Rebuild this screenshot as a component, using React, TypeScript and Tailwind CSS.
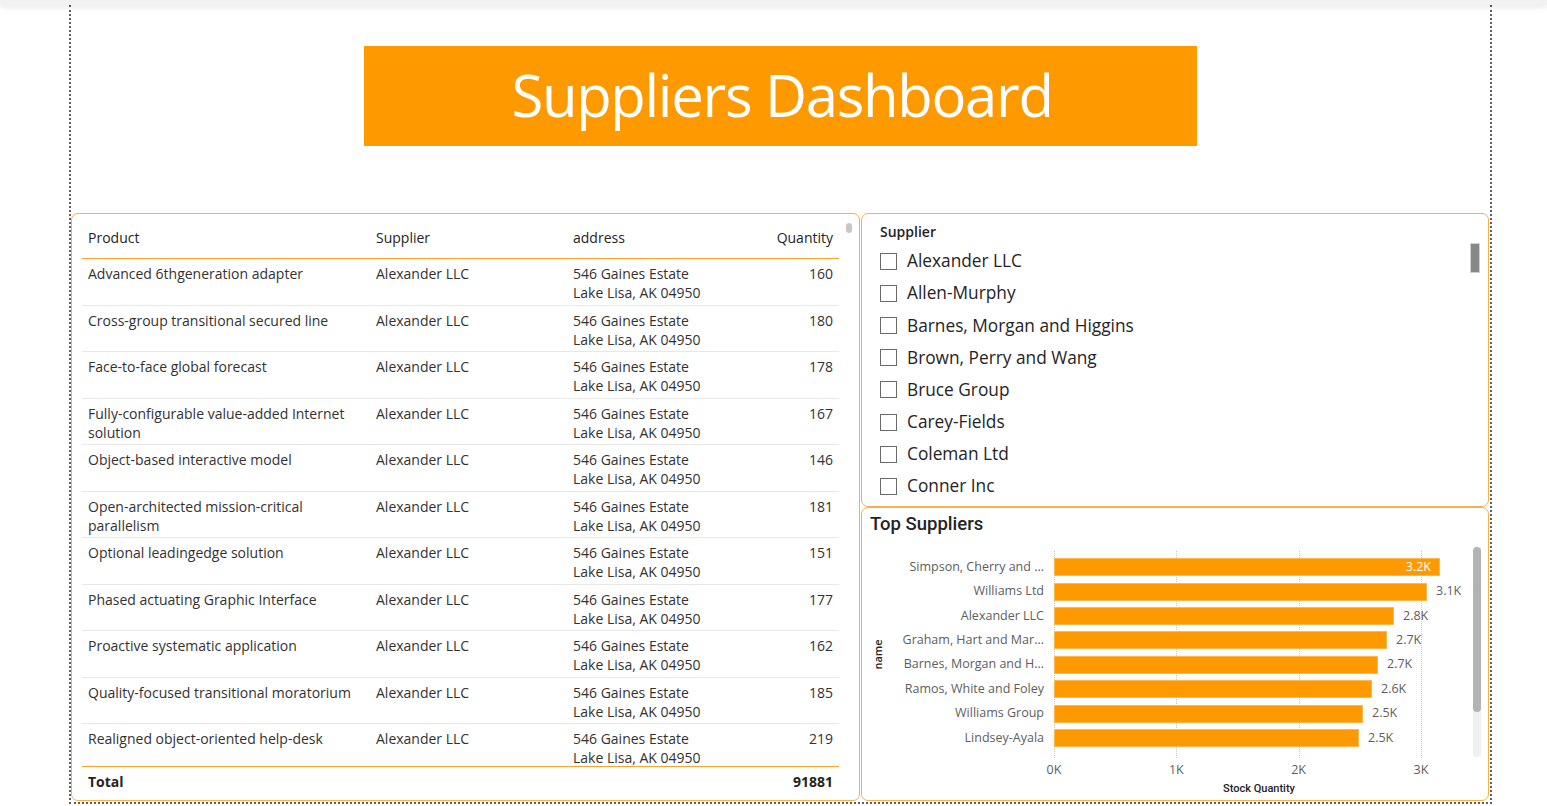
import React from "react";

const rows: { p: string[]; q: number }[] = [
  { p: ["Advanced 6thgeneration adapter"], q: 160 },
  { p: ["Cross-group transitional secured line"], q: 180 },
  { p: ["Face-to-face global forecast"], q: 178 },
  { p: ["Fully-configurable value-added Internet", "solution"], q: 167 },
  { p: ["Object-based interactive model"], q: 146 },
  { p: ["Open-architected mission-critical", "parallelism"], q: 181 },
  { p: ["Optional leadingedge solution"], q: 151 },
  { p: ["Phased actuating Graphic Interface"], q: 177 },
  { p: ["Proactive systematic application"], q: 162 },
  { p: ["Quality-focused transitional moratorium"], q: 185 },
  { p: ["Realigned object-oriented help-desk"], q: 219 },
];

const suppliers = [
  "Alexander LLC",
  "Allen-Murphy",
  "Barnes, Morgan and Higgins",
  "Brown, Perry and Wang",
  "Bruce Group",
  "Carey-Fields",
  "Coleman Ltd",
  "Conner Inc",
];

const bars: { n: string; w: number; v: string; inside?: boolean }[] = [
  { n: "Simpson, Cherry and ...", w: 386, v: "3.2K", inside: true },
  { n: "Williams Ltd", w: 373, v: "3.1K" },
  { n: "Alexander LLC", w: 340, v: "2.8K" },
  { n: "Graham, Hart and Mar...", w: 333, v: "2.7K" },
  { n: "Barnes, Morgan and H...", w: 324, v: "2.7K" },
  { n: "Ramos, White and Foley", w: 318, v: "2.6K" },
  { n: "Williams Group", w: 309, v: "2.5K" },
  { n: "Lindsey-Ayala", w: 305, v: "2.5K" },
];

const ticks = ["0K", "1K", "2K", "3K"];

export default function App() {
  return (
    <div
      className="w-[1547px] h-[806px] bg-white overflow-hidden text-[#252423]"
      style={{ fontFamily: '"Open Sans", "Noto Sans", sans-serif' }}
    >
      <div className="h-[5px] bg-[#f3f2f1] shadow-[0_2px_6px_rgba(0,0,0,0.10)] relative z-10" />
      <div className="ml-[69px] w-[1423px] h-[799px] border-x-2 border-b-2 border-dotted border-[#5f5f5f] flex flex-col">
        {/* Title */}
        <div className="h-[208px] flex justify-center pt-[41px] shrink-0">
          <div className="w-[833px] h-[100px] bg-[#ff9900] flex items-center justify-center">
            <span className="text-white text-[58px] leading-none tracking-[-1.3px] pb-[2px] pl-[3px]">
              Suppliers Dashboard
            </span>
          </div>
        </div>

        {/* Panels */}
        <div className="flex gap-[1px] h-[588px] shrink-0">
          {/* Table */}
          <div className="relative w-[789px] h-full border border-[#f7b04c] rounded-[7px] flex flex-col pl-[10px] pr-[20px] pt-[3px] pb-[3px]">
            <div className="absolute left-[774px] top-[9px] w-[6px] h-[10px] rounded-full bg-[#c8c6c4]" />
            <div className="flex h-[42px] items-center border-b border-[#f7a330] text-[14px] shrink-0">
              <div className="w-[288px] pl-[6px]">Product</div>
              <div className="w-[197px] pl-[6px]">Supplier</div>
              <div className="w-[204px] pl-[6px]">address</div>
              <div className="flex-1 pr-[6px] text-right">Quantity</div>
            </div>
            <div className="flex-1 overflow-hidden">
              {rows.map((r, i) => (
                <div
                  key={i}
                  className="flex h-[46.5px] border-b border-[#e8e8e8] text-[14px] leading-[19px] pt-[5px] text-[#333231]"
                >
                  <div className="w-[288px] pl-[6px]">
                    {r.p.map((l, j) => (
                      <div key={j} className="whitespace-nowrap">
                        {l}
                      </div>
                    ))}
                  </div>
                  <div className="w-[197px] pl-[6px] whitespace-nowrap">Alexander LLC</div>
                  <div className="w-[204px] pl-[6px] whitespace-nowrap">
                    <div>546 Gaines Estate</div>
                    <div>Lake Lisa, AK 04950</div>
                  </div>
                  <div className="flex-1 pr-[6px] text-right">{r.q}</div>
                </div>
              ))}
            </div>
            <div className="flex h-[31px] items-center border-t border-[#f7a330] text-[14px] font-bold shrink-0 pb-[1px]">
              <div className="flex-1 pl-[6px]">Total</div>
              <div className="pr-[6px]">91881</div>
            </div>
          </div>

          {/* Right column */}
          <div className="w-[628px] h-full flex flex-col">
            {/* Slicer */}
            <div className="relative h-[294px] border border-[#f7b04c] rounded-[7px] pl-[18px] pt-[8px] shrink-0">
              <div className="absolute left-[608px] top-[29px] w-[10px] h-[30px] bg-[#8a8886] border border-[#d0d0d0]" />
              <div className="text-[14px] leading-[20px] font-semibold text-[#252423]">Supplier</div>
              <div className="mt-[3px]">
                {suppliers.map((s) => (
                  <div key={s} className="h-[32.2px] flex items-center gap-[10px]">
                    <div className="w-[17px] h-[17px] border border-[#6b6a69] bg-white" />
                    <span className="text-[17.3px] text-[#252423] whitespace-nowrap">{s}</span>
                  </div>
                ))}
              </div>
            </div>

            {/* Chart */}
            <div className="relative flex-1 border border-[#f7b04c] rounded-[7px] flex flex-col">
              <div className="absolute left-[611px] top-[39px] w-[8px] h-[210px] rounded-full bg-[#f0f0f0]">
                <div className="h-[165px] w-full rounded-full bg-[#b3b3b3]" />
              </div>
              <div
                className="pl-[8px] pt-[4px] text-[18.5px] leading-[24px] font-medium text-[#252423]"
                style={{ fontFamily: 'Roboto, "Noto Sans", sans-serif' }}
              >
                Top Suppliers
              </div>
              <div className="pt-[15px]">
                <div className="flex">
                  <div className="w-[30px] flex items-center justify-center">
                    <span className="-rotate-90 text-[11px] font-semibold text-[#252423] leading-none">
                      name
                    </span>
                  </div>
                  <div className="relative pt-[4px] pb-[8px]">
                    {ticks.map((t, i) => (
                      <div
                        key={t}
                        className="absolute top-0 bottom-0 border-l border-dotted border-[#c8c6c4]"
                        style={{ left: 162 + i * 122.3 }}
                      />
                    ))}
                    {bars.map((b) => (
                      <div key={b.n} className="relative flex items-center h-[24.4px]">
                        <div className="w-[152px] text-right text-[12.5px] text-[#605e5c] whitespace-nowrap">
                          {b.n}
                        </div>
                        <div className="ml-[10px] w-[410px] flex items-center">
                          <div
                            className="h-[18px] bg-[#ff9900] border border-[#ffb84d] flex items-center justify-end"
                            style={{ width: b.w }}
                          >
                            {b.inside && (
                              <span className="text-white text-[12.5px] pr-[8px]">{b.v}</span>
                            )}
                          </div>
                          {!b.inside && (
                            <span className="ml-[9px] text-[12.5px] text-[#605e5c]">{b.v}</span>
                          )}
                        </div>
                      </div>
                    ))}
                  </div>
                </div>
                <div className="relative h-[24px] ml-[192px] w-[410px]">
                  {ticks.map((t, i) => (
                    <span
                      key={t}
                      className="absolute top-0 h-[24px] flex items-center -translate-x-1/2 text-[12.5px] text-[#605e5c]"
                      style={{ left: i * 122.3 }}
                    >
                      {t}
                    </span>
                  ))}
                </div>
                <div
                  className="ml-[192px] w-[410px] h-[14px] flex items-center justify-center text-[11px] font-medium text-[#252423]"
                  style={{ fontFamily: 'Roboto, "Noto Sans", sans-serif' }}
                >
                  Stock Quantity
                </div>
              </div>
            </div>
          </div>
        </div>
      </div>
    </div>
  );
}
